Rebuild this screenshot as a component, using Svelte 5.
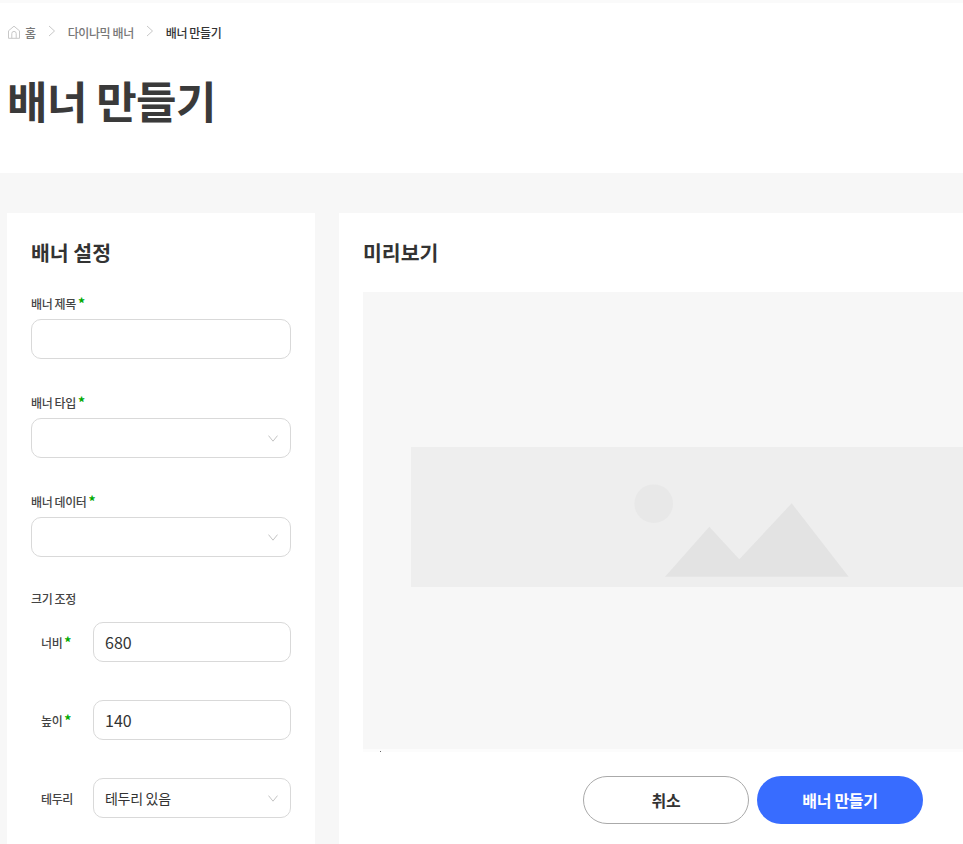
<script>
  let title = '';
  let type = '';
  let dataSource = '';
  let width = 680;
  let height = 140;

  const crumbs = ['다이나믹 배너', '배너 만들기'];
</script>

{#snippet chevron()}
  <svg class="chevron" viewBox="0 0 10 7" width="10" height="7" fill="none" stroke="#c4c4c4" stroke-width="1"><path d="M.5.6 5 6.200 9.500.6" /></svg>
{/snippet}

<div class="page">
  <header class="page-head">
    <nav class="crumbs">
      <svg class="home" viewBox="0 0 14 14" width="14" height="14" fill="none" stroke="#c8c8c8" stroke-width="1">
        <path d="M1.500 5.800 7 1.200l5.500 4.600v7.500h-11zM4.800 13.300V8.600a2.200 2.200 0 0 1 4.400 0v4.700" />
      </svg>
      <span class="crumb">홈</span>
      {#each crumbs as crumb, i}
        <svg class="sep" viewBox="0 0 8 12" width="8" height="12" fill="none" stroke="#c8c8c8" stroke-width="1">
          <path d="M1 1l5.500 5L1 11" />
        </svg>
        <span class="crumb" class:current={i === crumbs.length - 1}>{crumb}</span>
      {/each}
    </nav>
    <h1>배너 만들기</h1>
  </header>

  <main class="content">
    <section class="card settings">
      <h2>배너 설정</h2>

      <div class="field">
        <label for="title">배너 제목<em>*</em></label>
        <input id="title" bind:value={title} />
      </div>

      <div class="field">
        <label for="type">배너 타입<em>*</em></label>
        <div class="select" id="type">{type}{@render chevron()}</div>
      </div>

      <div class="field">
        <label for="data">배너 데이터<em>*</em></label>
        <div class="select" id="data">{dataSource}{@render chevron()}</div>
      </div>

      <div class="size-title">크기 조정</div>

      <div class="size-row">
        <label for="w">너비<em>*</em></label>
        <input id="w" bind:value={width} />
      </div>
      <div class="size-row">
        <label for="h">높이<em>*</em></label>
        <input id="h" bind:value={height} />
      </div>
      <div class="size-row">
        <label for="b">테두리</label>
        <div class="select" id="b">테두리 있음{@render chevron()}</div>
      </div>
    </section>

    <section class="card preview-card">
      <h2>미리보기</h2>
      <div class="preview">
        <svg class="banner" viewBox="0 0 680 140" style="width:{width}px;height:{height}px">
          <rect width="680" height="140" fill="#eee" />
          <circle cx="242.700" cy="56.700" r="19.300" fill="#e8e8e8" />
          <path d="M254 129.700 298.300 79.700 328.300 112.300 380.700 56.300 437.700 129.700z" fill="#e3e3e3" />
        </svg>
      </div>
      <div class="stray"></div>
      <div class="actions">
        <button class="btn cancel">취소</button>
        <button class="btn primary">배너 만들기</button>
      </div>
    </section>
  </main>
</div>

<style>
  :global(body) {
    background: #f7f7f7;
    font-family: "Noto Sans CJK KR", "Noto Sans", sans-serif;
    color: #333;
    overflow: hidden;
  }
  .page {
    height: 844px;
    overflow: hidden;
  }
  .page-head {
    background: #fff;
    border-top: 3px solid #fafafa;
    height: 173px;
    padding: 20px 7px 0;
    box-sizing: border-box;
  }
  .crumbs {
    display: flex;
    align-items: center;
    height: 18px;
    font-size: 12px;
    letter-spacing: -0.4px;
  }
  .home { margin: 0 4px 0 0; }
  .sep { margin: 0 12px 2px 12px; }
  .crumb { color: #777; font-weight: 500; }
  .crumb.current { color: #333; }
  h1 {
    margin: 27px 0 0;
    font-size: 44px;
    line-height: 64px;
    font-weight: 700;
    letter-spacing: -0.6px;
    color: #3a3a3a;
  }
  .content {
    display: flex;
    gap: 24px;
    padding: 40px 0 0 7px;
  }
  .card {
    background: #fff;
    box-sizing: border-box;
    height: 640px;
  }
  h2 {
    margin: 0;
    font-size: 20.500px;
    line-height: 30px;
    font-weight: 700;
    color: #333;
  }
  .settings {
    width: 308px;
    flex-shrink: 0;
    padding: 24px;
  }
  .field {
    margin-top: 27px;
  }
  .field + .field { margin-top: 34px; }
  label, .size-title {
    display: block;
    font-size: 12px;
    line-height: 20px;
    font-weight: 500;
    letter-spacing: -0.4px;
    color: #444;
  }
  .field label { margin-bottom: 5px; }
  em {
    font-style: normal;
    font-weight: 700;
    font-size: 14px;
    line-height: 1;
    color: #0a0;
    margin-left: 2px;
  }
  input, .select {
    display: flex;
    align-items: center;
    width: 100%;
    height: 40px;
    box-sizing: border-box;
    padding: 0 12px 0 11px;
    border: 1px solid #d9d9d9;
    border-radius: 10px;
    background: #fff;
    font: inherit;
    font-size: 16px;
    color: #333;
    outline: none;
  }
  .select {
    font-size: 14px;
    letter-spacing: -0.3px;
  }
  .chevron { margin-left: auto; }
  .size-title { margin-top: 32px; }
  .size-row {
    display: flex;
    align-items: center;
    margin-top: 13px;
  }
  .size-row + .size-row { margin-top: 38px; }
  .size-row label {
    width: 62px;
    padding: 2px 0 0 10px;
    box-sizing: border-box;
    flex-shrink: 0;
  }
  .size-row input, .size-row .select { flex: 1; width: auto; min-width: 0; }
  .preview-card {
    flex: 1;
    min-width: 0;
    padding: 24px 0 0 24px;
    overflow: hidden;
  }
  .preview {
    display: flex;
    align-items: center;
    justify-content: center;
    width: 776px;
    height: 457px;
    box-sizing: border-box;
    padding-bottom: 8px;
    margin-top: 25px;
    background: #f7f7f7;
    box-shadow: 0 3px 0 #fcfcfc;
  }
  .banner {
    display: block;
    flex-shrink: 0;
  }
  .stray {
    width: 1px;
    height: 1px;
    margin: 2px 0 0 17px;
    background: #666;
  }
  .actions {
    display: flex;
    justify-content: flex-end;
    gap: 8px;
    margin-top: 24px;
    padding-right: 40px;
  }
  .btn {
    width: 166px;
    height: 48px;
    border-radius: 24px;
    font: inherit;
    font-size: 16px;
    font-weight: 700;
    letter-spacing: -0.3px;
  }
  .cancel {
    background: #fff;
    border: 1px solid #aaa;
    color: #333;
  }
  .primary {
    background: #386cff;
    border: none;
    color: #fff;
  }
</style>
